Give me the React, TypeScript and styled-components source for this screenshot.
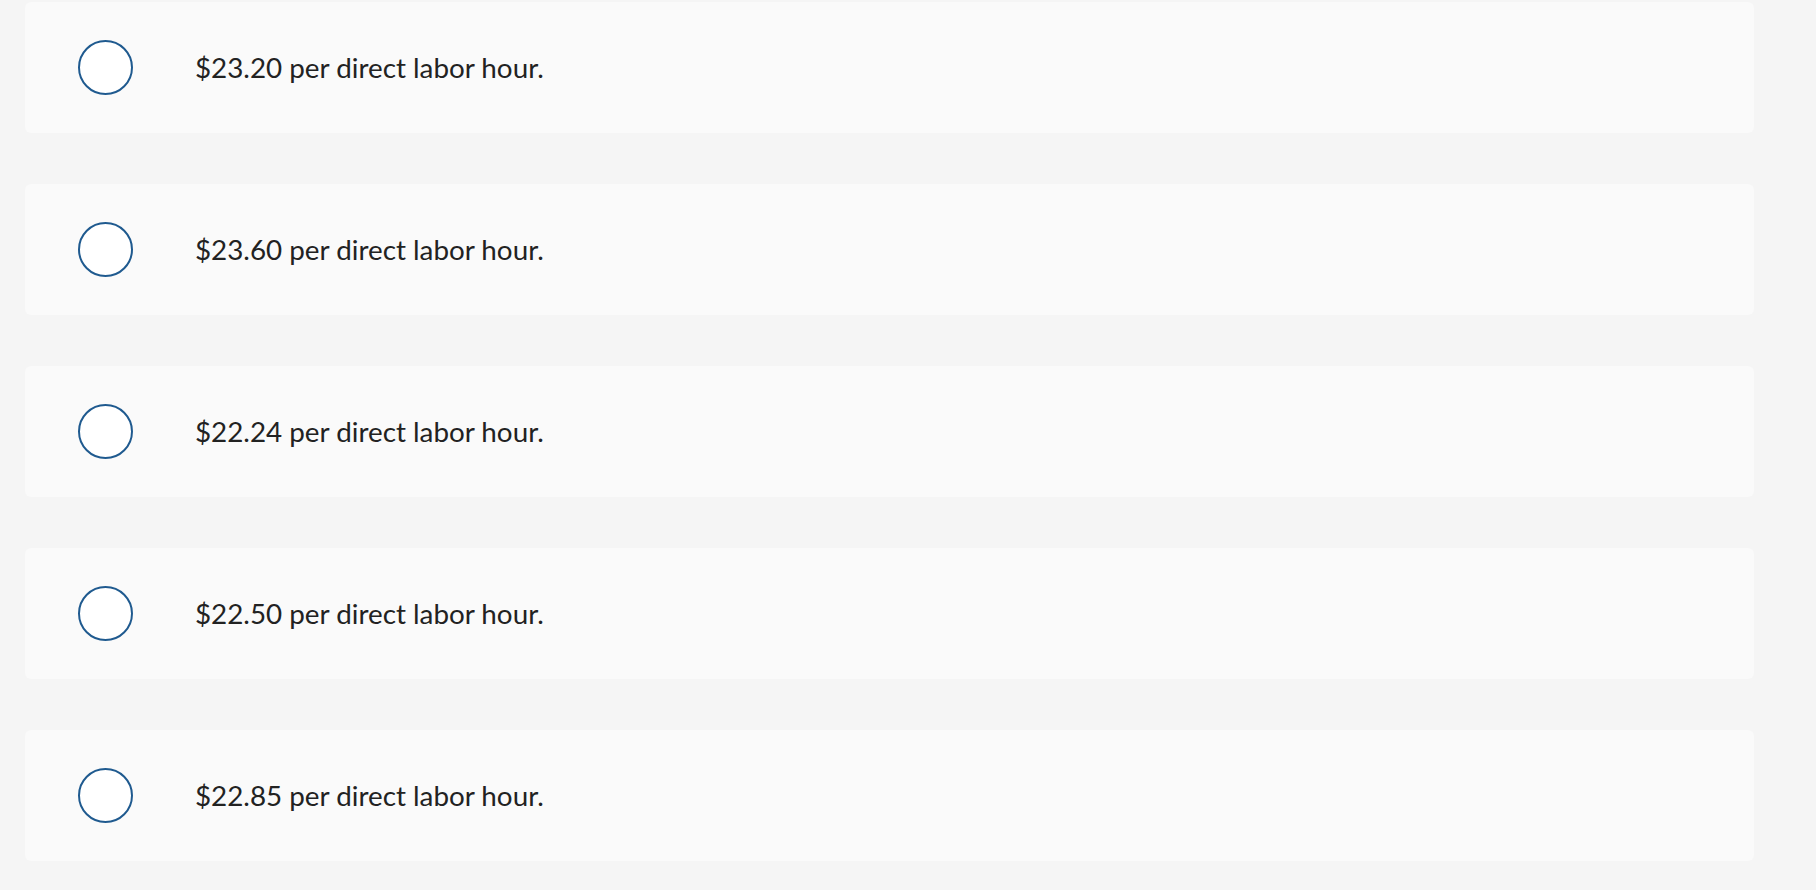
import React from "react";
import styled, { createGlobalStyle } from "styled-components";

const Global = createGlobalStyle`
  html, body { margin: 0; padding: 0; background: #f5f5f5; }
  body { font-family: "Lato", "Open Sans", Arial, sans-serif; }
`;

const List = styled.div`
  display: flex;
  flex-direction: column;
  gap: 51px;
  padding: 2px 62px 0 25px;
`;

const Card = styled.label`
  display: flex;
  align-items: center;
  height: 131px;
  background: #fafafa;
  border-radius: 6px;
  padding-left: 53px;
  box-sizing: border-box;
  cursor: pointer;
`;

const Radio = styled.span`
  width: 55px;
  height: 55px;
  box-sizing: border-box;
  border: 2px solid #1f5a8f;
  border-radius: 50%;
  background: #fff;
  flex: none;
`;

const Text = styled.span`
  margin-left: 62px;
  font-size: 27.8px;
  color: #222;
`;

const options = ["$23.20", "$23.60", "$22.24", "$22.50", "$22.85"];

export default function App() {
  return (
    <>
      <Global />
      <List>
        {options.map((o) => (
          <Card key={o}>
            <Radio />
            <Text>{o} per direct labor hour.</Text>
          </Card>
        ))}
      </List>
    </>
  );
}
